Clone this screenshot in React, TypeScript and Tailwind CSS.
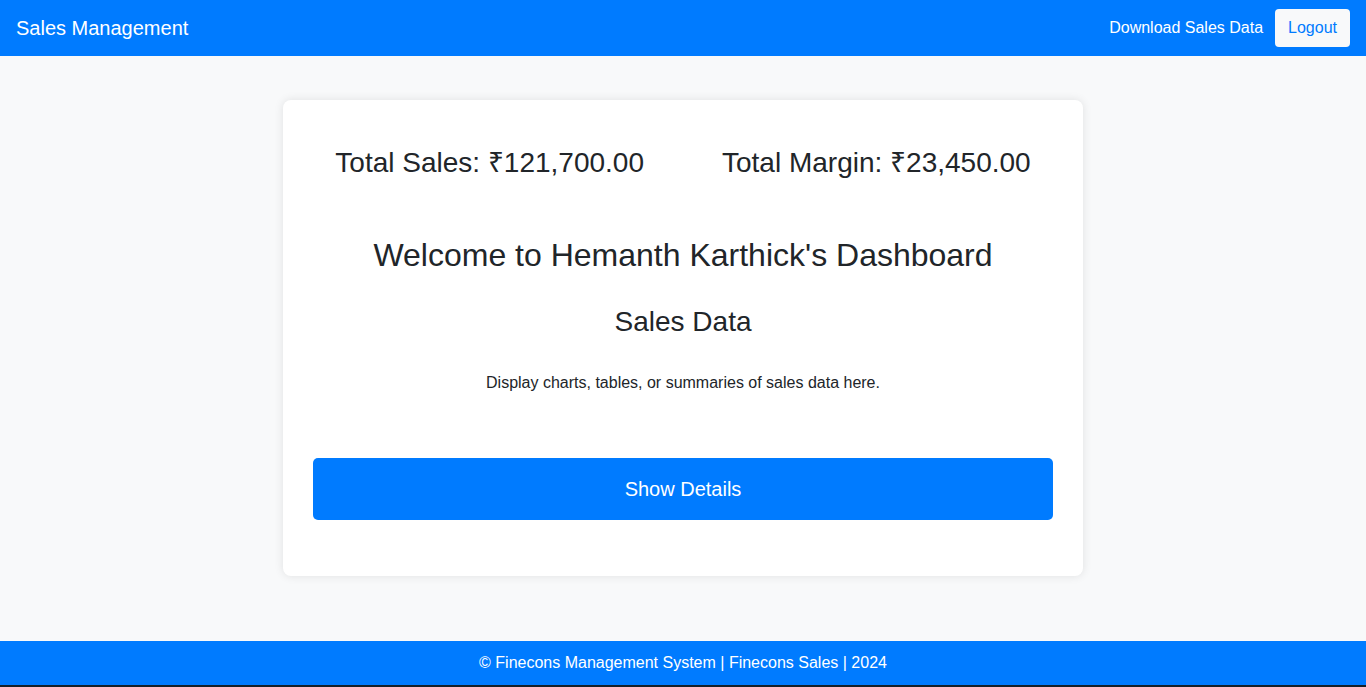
export default function App() {
  return (
    <div className="flex h-[687px] flex-col bg-[#f8f9fa] font-['Liberation_Sans',Arial,sans-serif] text-[#212529]">
      <nav className="flex h-14 shrink-0 items-center justify-between bg-[#007bff] px-4 text-white">
        <span className="text-xl">Sales Management</span>
        <div className="flex items-center gap-3">
          <a className="text-base">Download Sales Data</a>
          <button
            type="button"
            className="h-[38px] rounded bg-[#f8f9fa] px-[13px] text-base text-[#007bff]"
          >
            Logout
          </button>
        </div>
      </nav>

      <main className="flex flex-1 justify-center pt-[44px]">
        <div className="h-fit w-[800px] rounded-lg bg-white p-[30px] text-center shadow-[0_0_10px_rgba(0,0,0,0.1)]">
          <div className="mt-[16px] flex justify-center gap-[78px]">
            <h3 className="text-[28px] leading-[1.2]">Total Sales: ₹121,700.00</h3>
            <h3 className="text-[28px] leading-[1.2]">Total Margin: ₹23,450.00</h3>
          </div>
          <h2 className="mt-[56px] text-[32px] leading-[1.2]">Welcome to Hemanth Karthick's Dashboard</h2>
          <h3 className="mt-[31px] text-[28px] leading-[1.2]">Sales Data</h3>
          <p className="mt-[32px] text-base leading-6">Display charts, tables, or summaries of sales data here.</p>
          <button
            type="button"
            className="mt-[63px] mb-[26px] w-full rounded-[5px] bg-[#007bff] py-4 text-xl leading-[1.5] text-white"
          >
            Show Details
          </button>
        </div>
      </main>

      <footer className="flex h-[44px] shrink-0 items-center justify-center bg-[#007bff] text-base text-white">
        © Finecons Management System | Finecons Sales | 2024
      </footer>
      <div className="h-[2px] shrink-0 bg-[#14202b]" />
    </div>
  );
}
